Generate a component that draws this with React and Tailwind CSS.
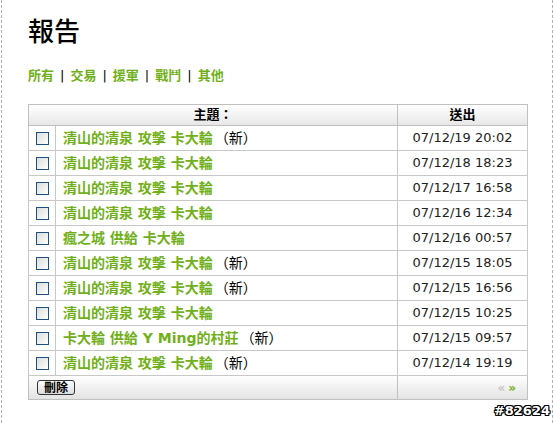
import React from "react";

const rows = [
  { s: "清山的清泉 攻擊 卡大輪", n: true, d: "07/12/19 20:02" },
  { s: "清山的清泉 攻擊 卡大輪", n: false, d: "07/12/18 18:23" },
  { s: "清山的清泉 攻擊 卡大輪", n: false, d: "07/12/17 16:58" },
  { s: "清山的清泉 攻擊 卡大輪", n: false, d: "07/12/16 12:34" },
  { s: "瘋之城 供給 卡大輪", n: false, d: "07/12/16 00:57" },
  { s: "清山的清泉 攻擊 卡大輪", n: true, d: "07/12/15 18:05" },
  { s: "清山的清泉 攻擊 卡大輪", n: true, d: "07/12/15 16:56" },
  { s: "清山的清泉 攻擊 卡大輪", n: false, d: "07/12/15 10:25" },
  { s: "卡大輪 供給 Y Ming的村莊", n: true, d: "07/12/15 09:57" },
  { s: "清山的清泉 攻擊 卡大輪", n: true, d: "07/12/14 19:19" },
];

const font = "font-['DejaVu_Sans','Noto_Sans_CJK_TC',sans-serif]";

function Check() {
  return (
    <div className="w-[13px] h-[13px] border border-[#1c5180] bg-gradient-to-br from-[#dcdcd7] to-white mx-auto" />
  );
}

export default function App() {
  return (
    <div className={`${font} w-[554px] h-[423px] bg-white relative overflow-hidden`}>
      <div className="ml-[1px] w-[552px] h-[423px] border-l border-r border-dashed border-[#b0b0b0] pl-[26px] pt-[14px]">
        <h1 className="text-[26px] leading-[32px] text-black font-medium font-['Noto_Sans_CJK_TC',sans-serif]">報告</h1>
        <div className="mt-[21px] text-[13px] leading-[18px] font-bold text-[#71b01a] flex items-center gap-[6px]">
          <span>所有</span><span className="text-black font-normal">|</span>
          <span>交易</span><span className="text-black font-normal">|</span>
          <span>援軍</span><span className="text-black font-normal">|</span>
          <span>戰鬥</span><span className="text-black font-normal">|</span>
          <span>其他</span>
        </div>
        <table className="mt-[19px] w-[500px] border-collapse border border-[#c0c0c0] text-[13px]">
          <thead>
            <tr className="h-[21px] bg-gradient-to-b from-white to-[#e6e6e6]">
              <th colSpan={2} className="border border-[#c0c0c0] font-bold text-black text-center p-0">主題：</th>
              <th className="border border-[#c0c0c0] font-bold text-black text-center p-0 w-[130px]">送出</th>
            </tr>
          </thead>
          <tbody>
            {rows.map((r, i) => (
              <tr key={i} className="h-[25px]">
                <td className="border border-[#c8c8c8] w-[27px] p-0"><Check /></td>
                <td className="border border-[#c8c8c8] pl-[7px] p-0">
                  <span className="font-bold text-[14px] text-[#71b01a]">{r.s}</span>
                  {r.n && <span className="text-black text-[14px] ml-[2px]">（新）</span>}
                </td>
                <td className="border border-[#c8c8c8] text-center text-[#222] p-0">{r.d}</td>
              </tr>
            ))}
            <tr className="h-[24px] bg-gradient-to-b from-white to-[#e2e2e2]">
              <td colSpan={2} className="border border-[#c0c0c0] pl-[8px] p-0">
                <span className="inline-flex items-center justify-center w-[38px] h-[15px] border border-[#333] rounded-[3px] bg-gradient-to-b from-white to-[#dcdcdc] text-[12px] leading-none font-bold text-black">刪除</span>
              </td>
              <td className="border border-[#c0c0c0] text-right pr-[8px] p-0 text-[12px] font-bold tracking-[3px]">
                <span className="text-[#c8c8c8]">«</span><span className="text-[#71b01a]">»</span>
              </td>
            </tr>
          </tbody>
        </table>
      </div>
      <div className="absolute right-[4px] bottom-[3px] text-[13px] font-bold text-white [text-shadow:1px_0_0_#000,-1px_0_0_#000,0_1px_0_#000,0_-1px_0_#000,1px_1px_0_#000,-1px_-1px_0_#000,1px_-1px_0_#000,-1px_1px_0_#000]">#82624</div>
    </div>
  );
}
